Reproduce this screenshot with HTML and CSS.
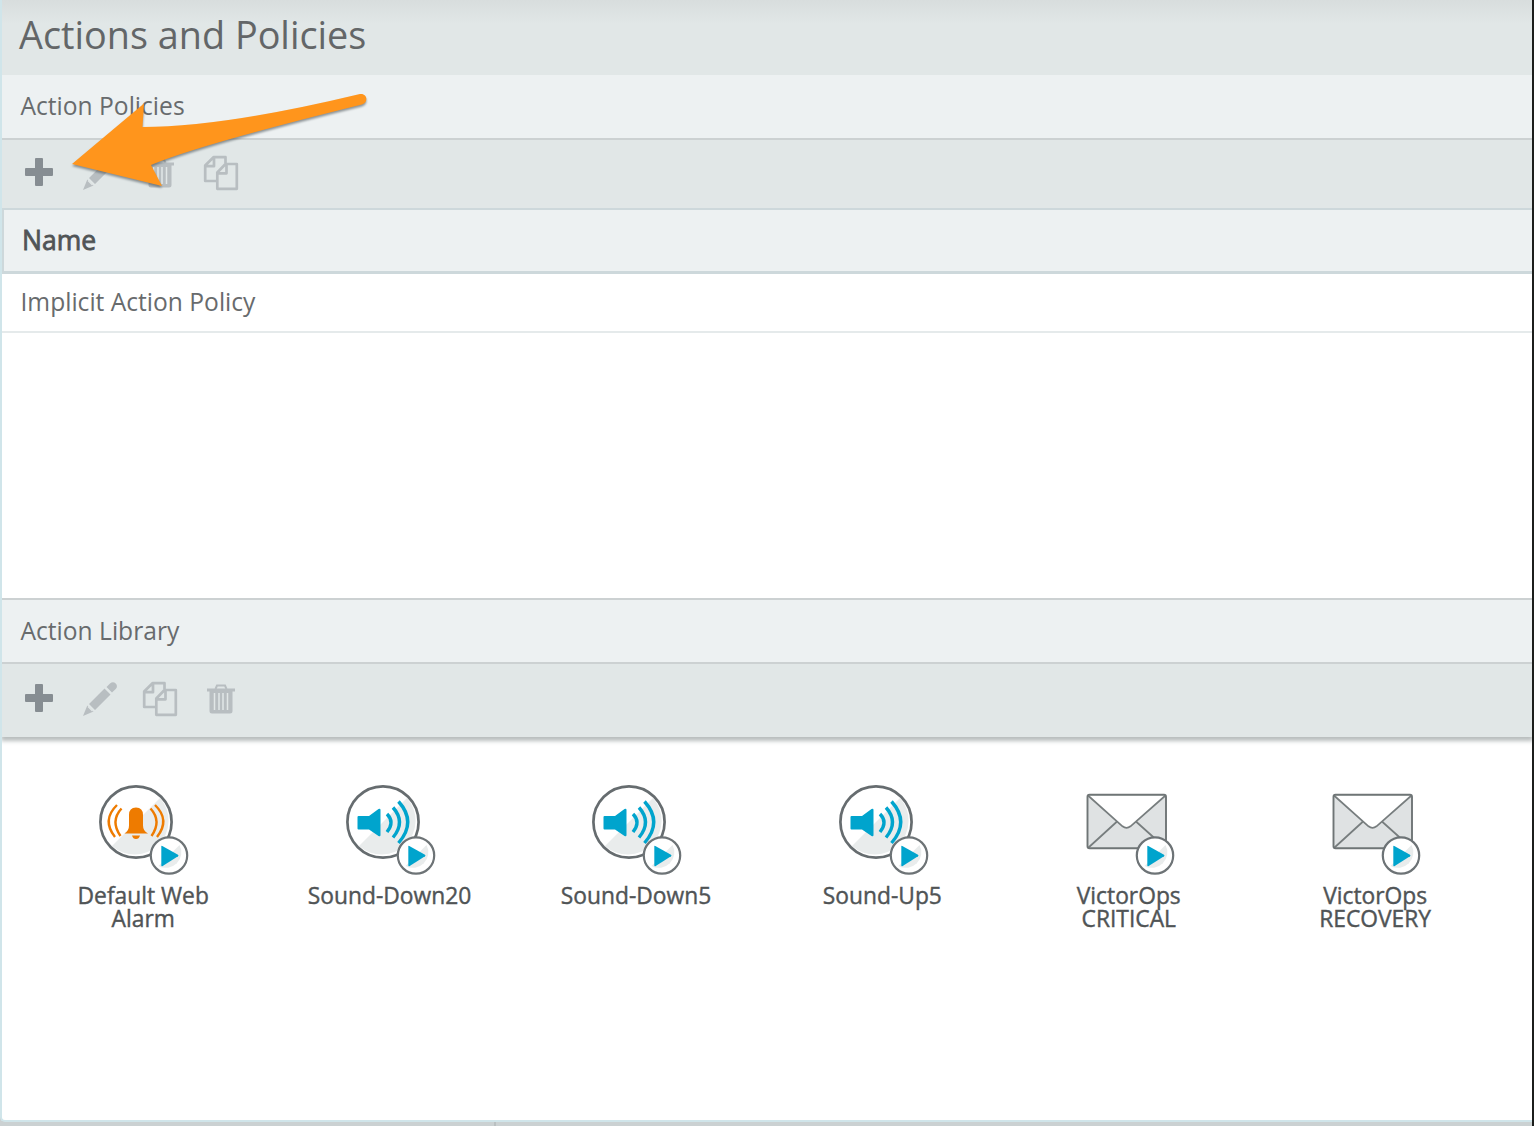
FILE: index.html
```html
<!DOCTYPE html>
<html lang="en">
<head>
<meta charset="utf-8">
<title>Actions and Policies</title>
<link rel="stylesheet" href="styles.css">
</head>
<body>
<svg class="defs" aria-hidden="true">
  <symbol id="plus" viewBox="0 0 28 28"><path d="M11 0h6q1 0 1 1v9h9q1 0 1 1v6q0 1-1 1h-9v9q0 1-1 1h-6q-1 0-1-1v-9H1q-1 0-1-1v-6q0-1 1-1h9V1q0-1 1-1z" fill="#868d92"/></symbol>
  <symbol id="pencil" viewBox="0 0 36 36"><path d="M1 35 5.300 24.500 11.500 30.500zM7 23 22.500 7.500l6 6L13 29zM24.500 6l3.500-3.500q3-2.500 5.700 0 2.500 2.700 0 5.500L30 11.500z" fill="#b8bec1"/><path d="M6 25.500l4.500 4.500" stroke="#e1e7e7" stroke-width="1.200"/></symbol>
  <symbol id="copy" viewBox="0 0 36 36"><g fill="none" stroke="#b8bec1" stroke-width="2.700" stroke-linejoin="round"><path d="M22.500 8V2.200H10.500L2.200 10.500V26H13M11 2.200v9H2.200"/><path d="M22.500 9H33.800V33.800H14.300V17.500zM23.500 9v9.300h-9.200"/></g></symbol>
  <symbol id="trash" viewBox="0 0 28 30"><path d="M2.500 8h23v19q0 2.500-2.500 2.500H5Q2.500 29.500 2.500 27zM0 4.600h28v2.800H0zM2.500 7h23v2h-23z" fill="#b8bec1"/><path d="M8.500 5 10 1.500h8L19.500 5" fill="none" stroke="#b8bec1" stroke-width="2"/><path d="M7.500 9v17M12 9v17M16 9v17M20.500 9v17" stroke="#e1e7e7" stroke-width="1.500"/></symbol>
  <symbol id="play" viewBox="0 0 40 40"><circle cx="20" cy="20" r="18.300" fill="#fff"/><path d="M30.500 9.500A15.500 15.500 0 0 1 9.500 30.500z" fill="#e9ecec"/><circle cx="20" cy="20" r="18.200" fill="none" stroke="#6d7376" stroke-width="2.200"/><path d="M13.300 10.500 29 19.300q1 .7 0 1.400L13.300 30.700q-1 .3-1-.7V11q0-1 1-.5z" fill="#00a4cd"/></symbol>
  <symbol id="disc" viewBox="0 0 76 76"><circle cx="38" cy="38" r="36" fill="#fff"/><path d="M62 14A34 34 0 0 1 14 62z" fill="#e9ecec"/><circle cx="38" cy="38" r="35.600" fill="none" stroke="#666c6f" stroke-width="2.700"/></symbol>
  <symbol id="alarm" viewBox="0 0 92 92">
    <use href="#disc" width="76" height="76"/>
    <path d="M26.500 49.500q4.500-2.500 4.500-8V31q0-7.500 7-7.500t7 7.500v10.500q0 5.500 5 8zM34 51.500h8q-1 3.500-4 3.500t-4-3.500z" fill="#ee7b00"/>
    <path d="M19 21Q3.500 36 17 53M23.500 24.500Q12 37 22.500 52M57 21Q72.500 36 59 53M52.500 24.500Q64 37 53.500 52" fill="none" stroke="#ee7b00" stroke-width="2.400"/>
    <use href="#play" x="51" y="51.500" width="40" height="40"/>
  </symbol>
  <symbol id="sound" viewBox="0 0 92 92">
    <use href="#disc" width="76" height="76"/>
    <path d="M13.500 32h10.500L33.500 25q2-1 2 1v25q0 2-2 1L24 45.500H13.500q-1 0-1-1V33q0-1 1-1z" fill="#00a4cd"/>
    <path d="M42 30Q50 38 42 48M48 23.500Q61 38 48 53.500M53.500 17.500Q72 38 53.500 59" fill="none" stroke="#00a4cd" stroke-width="3.400"/>
    <use href="#play" x="51" y="51.500" width="40" height="40"/>
  </symbol>
  <symbol id="mail" viewBox="0 0 92 92">
    <rect x="3.500" y="10.800" width="78.500" height="53.500" rx="2" fill="#dfe2e3"/>
    <path d="M4 11.500H81.500L46.500 42.300q-4 3-8 0z" fill="#fff"/>
    <path d="M4 11.500 38.500 42.300q4 3 8 0L81.500 11.500M4 64 32.500 38M81.500 64 52.500 38" fill="none" stroke="#777d7e" stroke-width="1.700"/>
    <rect x="3.500" y="10.800" width="78.500" height="53.500" rx="2" fill="none" stroke="#6f7576" stroke-width="1.900"/>
    <use href="#play" x="51" y="51.500" width="40" height="40"/>
  </symbol>
</svg>
<main class="window">
  <h1 class="title">Actions and Policies</h1>
  <section class="policies">
    <h2 class="heading">Action Policies</h2>
    <div class="toolbar">
      <svg class="plus"><use href="#plus"/></svg>
      <svg class="pencil"><use href="#pencil"/></svg>
      <svg class="trash"><use href="#trash"/></svg>
      <svg class="copy"><use href="#copy"/></svg>
    </div>
    <div class="column-head">Name</div>
    <div class="row">Implicit Action Policy</div>
  </section>
  <section class="library">
    <h2 class="heading">Action Library</h2>
    <div class="toolbar">
      <svg class="plus"><use href="#plus"/></svg>
      <svg class="pencil"><use href="#pencil"/></svg>
      <svg class="copy"><use href="#copy"/></svg>
      <svg class="trash"><use href="#trash"/></svg>
    </div>
    <div class="actions">
      <div class="action"><svg><use href="#alarm"/></svg><span>Default Web<br>Alarm</span></div>
      <div class="action"><svg><use href="#sound"/></svg><span>Sound-Down20</span></div>
      <div class="action"><svg><use href="#sound"/></svg><span>Sound-Down5</span></div>
      <div class="action"><svg><use href="#sound"/></svg><span>Sound-Up5</span></div>
      <div class="action"><svg><use href="#mail"/></svg><span>VictorOps<br>CRITICAL</span></div>
      <div class="action"><svg><use href="#mail"/></svg><span>VictorOps<br>RECOVERY</span></div>
    </div>
  </section>
</main>
<div class="footer"><i></i></div>
<svg class="pointer" viewBox="0 0 310 110"><path d="M9 75 81 14.500 79.500 38Q160 38 297 5C304 4 306 13 299 15.500Q135 56 88 76L99 97z" fill="#ff951c"/></svg>
</body>
</html>
```
FILE: styles.css
```css
* { box-sizing: border-box; }
body {
  margin: 0;
  width: 1534px;
  height: 1126px;
  overflow: hidden;
  position: relative;
  background: #cbd1d2;
  border-right: 2px solid #1c1e1c;
  font-family: "Open Sans", sans-serif;
  font-size: 24.6px;
  color: #686b6d;
}
.defs { position: absolute; width: 0; height: 0; }
.window {
  height: 1122px;
  display: flex;
  flex-direction: column;
  background: #fff;
  border-left: 2px solid #d0e5ea;
  border-bottom: 2px solid #d0e5ea;
  border-radius: 0 0 0 5px;
}
.title {
  margin: 0;
  height: 75px;
  padding-left: 17px;
  font-size: 37.8px;
  font-weight: 400;
  line-height: 69px;
  color: #636668;
  background: linear-gradient(#d8dddd, #e1e7e7 24px);
}
.policies { height: 523px; }
.heading {
  margin: 0;
  height: 65px;
  padding-left: 18.5px;
  font-size: 24.6px;
  font-weight: 400;
  line-height: 62px;
  background: #edf1f2;
  border-bottom: 2px solid #ccd1d2;
}
.toolbar {
  height: 68px;
  display: flex;
  align-items: center;
  padding-left: 23px;
  padding-bottom: 2px;
  background: #e1e7e7;
}
.toolbar svg { display: block; flex: none; }
.toolbar .plus { width: 28px; height: 28px; margin: 0 29px 2px 0; }
.toolbar .pencil { width: 36px; height: 36px; margin-right: 24px; }
.toolbar .copy { width: 36px; height: 36px; }
.toolbar .trash { width: 28px; height: 30px; margin: 0 29px 0 4px; }
.column-head {
  height: 66px;
  padding-left: 18px;
  border: 2px solid #cdd8db;
  border-right: 0;
  border-bottom-width: 3px;
  background: #edf1f2;
  color: #505456;
  font-size: 26.5px;
  font-weight: 400;
  -webkit-text-stroke: 0.8px;
  line-height: 60px;
}
.row {
  height: 59px;
  padding-left: 18.5px;
  border-bottom: 2px solid #e5eaeb;
  line-height: 55px;
}
.library { flex: 1; }
.library .heading { height: 66px; border-top: 2px solid #ccd1d2; line-height: 62px; }
.library .toolbar {
  height: 73px;
  padding-bottom: 3px;
  box-shadow: 0 3px 4px 1px #b9bebe;
  clip-path: inset(0 0 -9px 0);
}
.library .copy { margin-right: 26px; }
.library .trash { margin: 0 0 0 3px; }
.actions {
  display: grid;
  grid-template-columns: repeat(6, 246.4px);
  padding: 47px 0 0 18px;
}
.action {
  display: flex;
  flex-direction: column;
  align-items: center;
  text-align: center;
  color: #505456;
  font-size: 22.8px;
  font-weight: 400;
  -webkit-text-stroke: 0.4px;
  line-height: 23px;
}
.action svg { width: 92px; height: 92px; margin: 0 0 7.5px 2.5px; }
.footer { height: 4px; padding-left: 494px; }
.footer i { display: block; width: 2px; height: 4px; background: #bac0c1; }
.pointer {
  position: absolute;
  left: 63px;
  top: 89px;
  width: 310px;
  height: 110px;
  filter: drop-shadow(0 2px 1px rgba(60, 70, 75, .55));
}
```
